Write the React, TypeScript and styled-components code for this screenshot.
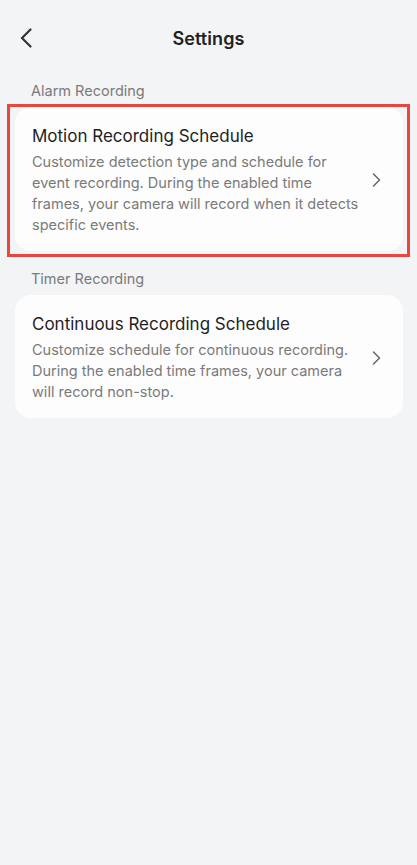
import React from 'react';
import styled, { createGlobalStyle } from 'styled-components';

const GlobalStyle = createGlobalStyle`
  html, body {
    margin: 0;
    padding: 0;
    background-color: #f3f4f6;
  }

  body {
    font-family: Inter, 'Noto Sans', 'Liberation Sans', sans-serif;
    -webkit-font-smoothing: antialiased;
  }
`;

interface ScheduleItem {
  title: string;
  description: string;
}

const sections: { label: string; item: ScheduleItem; highlighted?: boolean }[] = [
  {
    label: 'Alarm Recording',
    highlighted: true,
    item: {
      title: 'Motion Recording Schedule',
      description:
        'Customize detection type and schedule for event recording. During the enabled time frames, your camera will record when it detects specific events.',
    },
  },
  {
    label: 'Timer Recording',
    item: {
      title: 'Continuous Recording Schedule',
      description:
        'Customize schedule for continuous recording. During the enabled time frames, your camera will record non-stop.',
    },
  },
];

const BackIcon = () => (
  <svg width='14' height='20' viewBox='0 0 14 20' fill='none'>
    <path d='M11.5 1.5 L3 10 L11.5 18.5' stroke='#333' strokeWidth='2.2' strokeLinecap='round' strokeLinejoin='round' />
  </svg>
);

const ChevronIcon = () => (
  <svg width='9' height='14' viewBox='0 0 9 14' fill='none'>
    <path d='M1.5 1 L7.5 7 L1.5 13' stroke='#666' strokeWidth='1.5' strokeLinecap='round' strokeLinejoin='round' />
  </svg>
);

const App = () => {
  return (
    <Page>
      <GlobalStyle />
      <Header>
        <BackButton type='button' aria-label='Back'>
          <BackIcon />
        </BackButton>
        <Title>Settings</Title>
      </Header>

      <Content>
        {sections.map(({ label, item, highlighted }) => (
          <Section key={label}>
            <SectionLabel>{label}</SectionLabel>
            <Card>
              {highlighted && <Highlight />}
              <CardText>
                <CardTitle>{item.title}</CardTitle>
                <CardDesc>{item.description}</CardDesc>
              </CardText>
              <ChevronWrap>
                <ChevronIcon />
              </ChevronWrap>
            </Card>
          </Section>
        ))}
      </Content>
    </Page>
  );
};

export default App;

const Page = styled.div`
  width: 417px;
  min-height: 865px;
  background-color: #f3f4f6;
`;

const Header = styled.header`
  position: relative;
  display: flex;
  align-items: center;
  justify-content: center;
  height: 81px;
  padding-bottom: 4px;
  box-sizing: border-box;
`;

const BackButton = styled.button`
  position: absolute;
  left: 19px;
  top: 28px;
  display: flex;
  padding: 0;
  border: none;
  background: none;
`;

const Title = styled.h1`
  margin: 0;
  font-size: 18px;
  font-weight: 600;
  color: #222;
  letter-spacing: 0.1px;
`;

const Content = styled.div`
  display: flex;
  flex-direction: column;
  gap: 18px;
  padding: 0 14px 0 15px;
`;

const Section = styled.section`
  display: flex;
  flex-direction: column;
`;

const SectionLabel = styled.div`
  padding-left: 16px;
  margin-bottom: 6px;
  font-size: 14.5px;
  line-height: 20px;
  color: #7a7a7a;
`;

const Card = styled.div`
  position: relative;
  display: flex;
  align-items: center;
  padding: 18px 22px 16px 17px;
  background-color: #fdfdfd;
  border-radius: 16px;
`;

const Highlight = styled.div`
  position: absolute;
  top: -3px;
  left: -8px;
  right: -7px;
  bottom: -6px;
  border: 3px solid #e8473f;
  pointer-events: none;
`;

const CardText = styled.div`
  flex: 1;
  min-width: 0;
  padding-right: 6px;
`;

const CardTitle = styled.div`
  font-size: 17px;
  line-height: 22px;
  color: #1f1f1f;
  margin-bottom: 4px;
`;

const CardDesc = styled.div`
  font-size: 14.5px;
  line-height: 21px;
  color: #7a7a7a;
`;

const ChevronWrap = styled.div`
  display: flex;
  flex-shrink: 0;
`;
